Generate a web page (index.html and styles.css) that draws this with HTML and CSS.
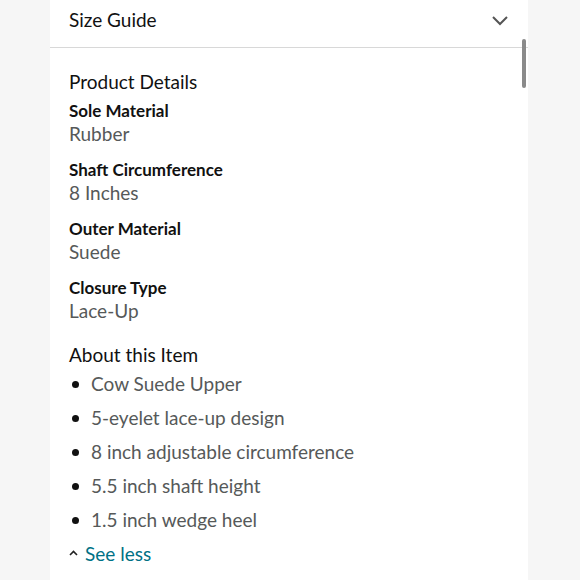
FILE: index.html
```html
<!DOCTYPE html>
<html>
<head>
<meta charset="utf-8">
<link rel="stylesheet" href="styles.css">
</head>
<body>
<div class="card">
  <div class="header">
    <span class="header-title">Size Guide</span>
    <svg class="chev" width="18" height="12" viewBox="0 0 18 12"><path d="M2 2 L9 9 L16 2" fill="none" stroke="#555" stroke-width="2"/></svg>
  </div>
  <div class="scrollbar"></div>
  <div class="content">
    <h2 class="section-title">Product Details</h2>
    <div class="detail">
      <div class="label">Sole Material</div>
      <div class="value">Rubber</div>
    </div>
    <div class="detail">
      <div class="label">Shaft Circumference</div>
      <div class="value">8 Inches</div>
    </div>
    <div class="detail">
      <div class="label">Outer Material</div>
      <div class="value">Suede</div>
    </div>
    <div class="detail">
      <div class="label">Closure Type</div>
      <div class="value">Lace-Up</div>
    </div>
    <h2 class="section-title about">About this Item</h2>
    <ul class="bullets">
      <li>Cow Suede Upper</li>
      <li>5-eyelet lace-up design</li>
      <li>8 inch adjustable circumference</li>
      <li>5.5 inch shaft height</li>
      <li>1.5 inch wedge heel</li>
    </ul>
    <div class="see-less">
      <svg class="up" width="9" height="6" viewBox="0 0 9 6"><path d="M1 5 L4.5 1.5 L8 5" fill="none" stroke="#222" stroke-width="1.6"/></svg>
      <span>See less</span>
    </div>
  </div>
</div>
</body>
</html>
```

FILE: styles.css
```css
html, body {
  margin: 0;
  padding: 0;
  background: #f6f6f6;
  font-family: "Lato", "Noto Sans", sans-serif;
}
.card {
  position: relative;
  margin-left: 50px;
  width: 478px;
  height: 580px;
  background: #fff;
  overflow: hidden;
}
.header {
  border-bottom: 1px solid #d8d8d8;
  display: flex;
  align-items: center;
  justify-content: space-between;
  padding: 0 19px 8px 19px;
  height: 39px;
}
.header-title {
  font-size: 19px;
  color: #111;
}
.chev {
  display: block;
  margin-top: 2px;
}
.scrollbar {
  position: absolute;
  left: 472px;
  top: 39px;
  width: 4px;
  height: 49px;
  border-radius: 2px;
  background: #8a8a8a;
}
.content {
  padding: 22px 19px 0 19px;
}
.section-title {
  margin: 0;
  font-weight: normal;
  font-size: 19px;
  line-height: 24px;
  color: #111;
}
.detail {
  margin-bottom: 13px;
}
.detail:first-of-type {
  margin-top: 6px;
}
.label {
  font-weight: bold;
  font-size: 17px;
  line-height: 22px;
  color: #111;
}
.value {
  font-size: 19px;
  line-height: 24px;
  color: #565959;
}
.about {
  margin-top: 20px;
}
.bullets {
  list-style: none;
  margin: 0;
  padding: 0;
}
.bullets li {
  display: flex;
  align-items: center;
  font-size: 19px;
  line-height: 34px;
  color: #565959;
}
.bullets li::before {
  content: "";
  width: 7px;
  height: 7px;
  border-radius: 50%;
  background: #111;
  margin: 0 12px 0 3px;
  flex-shrink: 0;
}
.see-less {
  display: flex;
  align-items: center;
  gap: 7px;
  font-size: 19px;
  line-height: 34px;
  color: #007185;
}
.up {
  display: block;
  margin-top: -2px;
}
```
